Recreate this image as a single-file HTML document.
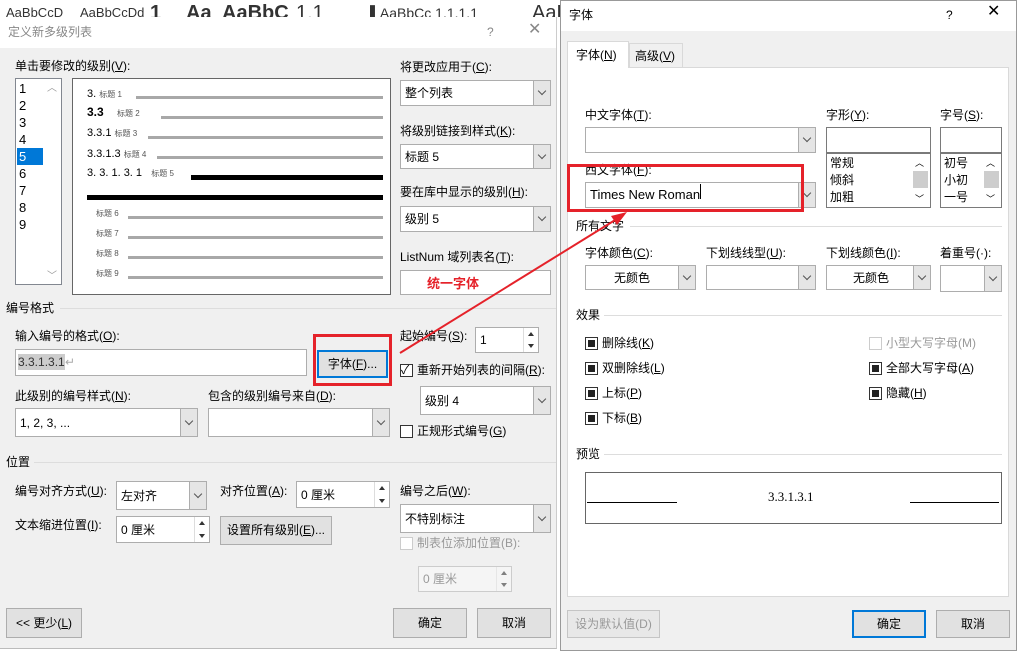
<!DOCTYPE html>
<html><head><meta charset="utf-8"><style>
*{box-sizing:border-box;margin:0;padding:0}
body{width:1020px;height:651px;position:relative;overflow:hidden;background:#fff;font-family:"Liberation Sans","Noto Sans CJK SC",sans-serif;font-size:12px;color:#000}
.a{position:absolute;white-space:nowrap}
.t{position:absolute;white-space:nowrap;line-height:14px}
.box{position:absolute;background:#fff;border:1px solid #7a7a7a}
.cb{position:absolute;background:#fff;border:1px solid #adadad}
.cb .ar{position:absolute;right:0;top:0;bottom:0;width:17px;background:#e5e5e5;border-left:1px solid #adadad}
.cb .ar:after{content:"";position:absolute;left:5px;top:50%;margin-top:-5px;width:5px;height:5px;border-right:1px solid #555;border-bottom:1px solid #555;transform:rotate(45deg)}
.cb span{position:absolute;left:4px;top:50%;margin-top:-8px;line-height:16px}
.btn{position:absolute;background:#e1e1e1;border:1px solid #adadad;text-align:center}
.sp{position:absolute;background:#fff;border:1px solid #adadad}
.sp .s{position:absolute;right:0;top:0;bottom:0;width:15px;border-left:1px solid #ddd;background:#fff}
.sp .s:before{content:"";position:absolute;left:4px;top:4px;border:3px solid transparent;border-bottom:4px solid #333;border-top:0}
.sp .s:after{content:"";position:absolute;left:4px;bottom:4px;border:3px solid transparent;border-top:4px solid #333;border-bottom:0}
.sp span{position:absolute;left:4px;top:50%;margin-top:-8px;line-height:16px}
.chk{position:absolute;width:13px;height:13px;border:1px solid #333;background:#fff}
.chk.f:after{content:"";position:absolute;left:2px;top:2px;width:7px;height:7px;background:#222}
.gl{position:absolute;height:3px;background:#a8a8a8}
.bl{position:absolute;height:5px;background:#000}
.sm{font-size:8px;color:#555}
.sep{position:absolute;height:1px;background:#ddd}
</style></head><body>
<!-- ribbon strip -->
<div class="a" style="left:0;top:0;width:560px;height:17px;background:#fff;overflow:hidden;color:#333">
<span style="position:absolute;left:6px;top:3px;font-size:13px;line-height:20px">AaBbCcD</span>
<span style="position:absolute;left:80px;top:3px;font-size:13px;line-height:20px">AaBbCcDd</span>
<span style="position:absolute;left:150px;top:1px;font-weight:bold;font-size:20px;line-height:24px">1</span>
<span style="position:absolute;left:186px;top:1px;font-weight:bold;font-size:20px;line-height:24px">Aa</span>
<span style="position:absolute;left:222px;top:1px;font-weight:bold;font-size:20px;line-height:24px">AaBbC</span>
<span style="position:absolute;left:296px;top:1px;font-size:20px;line-height:24px">1.1</span>
<span style="position:absolute;left:370px;top:3px;font-size:14px;line-height:20px">▌AaBbCc 1.1.1.1</span>
<span style="position:absolute;left:532px;top:1px;font-size:20px;line-height:24px">AaB</span>
</div>
<div class="a" style="left:0;top:17px;width:557px;height:632px;background:#f0f0f0;border-right:1px solid #ccc;border-bottom:1px solid #bbb"></div>
<div class="a" style="left:0;top:17px;width:556px;height:31px;background:#fff"></div>
<div class="t" style="left:8px;top:25px;color:#888">定义新多级列表</div>
<div class="t" style="left:487px;top:25px;color:#888">?</div>
<div class="t" style="left:528px;top:23px;color:#888;font-size:16px">✕</div>

<div class="t" style="left:15px;top:59px">单击要修改的级别(<u>V</u>):</div>
<div class="box" style="left:15px;top:78px;width:47px;height:207px;border-color:#828790"></div>
<div class="a" style="left:17px;top:148px;width:26px;height:17px;background:#0078d7"></div>
<div class="a" style="left:19px;top:80px;line-height:17px;font-size:13px">1<br>2<br>3<br>4<br><span style="color:#fff">5</span><br>6<br>7<br>8<br>9</div>
<div class="t" style="left:47px;top:82px;color:#999;font-size:10px">︿</div>
<div class="t" style="left:47px;top:270px;color:#999;font-size:10px">﹀</div>

<div class="box" style="left:72px;top:78px;width:319px;height:217px;border-color:#666"></div>
<div class="t" style="left:87px;top:87px;font-size:11px">3. <span class="sm">标题 1</span></div><div class="gl" style="left:136px;top:96px;width:247px"></div>
<div class="t" style="left:87px;top:105px;font-size:12px;font-weight:bold">3.3 &nbsp;&nbsp;&nbsp;<span class="sm" style="font-weight:normal">标题 2</span></div><div class="gl" style="left:161px;top:116px;width:222px"></div>
<div class="t" style="left:87px;top:126px;font-size:11px">3.3.1 <span class="sm">标题 3</span></div><div class="gl" style="left:148px;top:136px;width:235px"></div>
<div class="t" style="left:87px;top:147px;font-size:11px">3.3.1.3 <span class="sm">标题 4</span></div><div class="gl" style="left:157px;top:156px;width:226px"></div>
<div class="t" style="left:87px;top:166px;font-size:11px">3. 3. 1. 3. 1 &nbsp;&nbsp;<span class="sm">标题 5</span></div><div class="bl" style="left:191px;top:175px;width:192px"></div>
<div class="bl" style="left:87px;top:195px;width:296px"></div>
<div class="t sm" style="left:96px;top:207px">标题 6</div><div class="gl" style="left:128px;top:216px;width:255px"></div>
<div class="t sm" style="left:96px;top:227px">标题 7</div><div class="gl" style="left:128px;top:236px;width:255px"></div>
<div class="t sm" style="left:96px;top:247px">标题 8</div><div class="gl" style="left:128px;top:256px;width:255px"></div>
<div class="t sm" style="left:96px;top:267px">标题 9</div><div class="gl" style="left:128px;top:276px;width:255px"></div>

<div class="t" style="left:400px;top:60px">将更改应用于(<u>C</u>):</div>
<div class="cb" style="left:400px;top:80px;width:151px;height:26px"><span>整个列表</span><div class="ar"></div></div>
<div class="t" style="left:400px;top:124px">将级别链接到样式(<u>K</u>):</div>
<div class="cb" style="left:400px;top:144px;width:151px;height:25px"><span>标题 5</span><div class="ar"></div></div>
<div class="t" style="left:400px;top:185px">要在库中显示的级别(<u>H</u>):</div>
<div class="cb" style="left:400px;top:206px;width:151px;height:26px"><span>级别 5</span><div class="ar"></div></div>
<div class="t" style="left:400px;top:250px">ListNum 域列表名(<u>T</u>):</div>
<div class="box" style="left:400px;top:270px;width:151px;height:25px;border-color:#adadad"></div>
<div class="t" style="left:427px;top:277px;color:#e5222a;font-weight:bold;font-size:13px">统一字体</div>

<div class="t" style="left:6px;top:301px">编号格式</div><div class="sep" style="left:60px;top:308px;width:496px"></div>
<div class="t" style="left:15px;top:329px">输入编号的格式(<u>O</u>):</div>
<div class="box" style="left:15px;top:349px;width:292px;height:27px;border-color:#adadad"></div>
<div class="t" style="left:18px;top:354px;background:#ccc;color:#333;line-height:16px">3.3.1.3.1</div><div class="t" style="left:65px;top:354px;color:#aaa;line-height:16px">↵</div>
<div class="btn" style="left:317px;top:350px;width:71px;height:28px;border:2px solid #0078d7;line-height:24px">字体(<u>F</u>)...</div>
<div class="a" style="left:313px;top:334px;width:79px;height:52px;border:3px solid #e5222a"></div>
<div class="t" style="left:400px;top:329px">起始编号(<u>S</u>):</div>
<div class="sp" style="left:475px;top:327px;width:64px;height:26px"><span>1</span><div class="s"></div></div>
<div class="chk" style="left:400px;top:364px;border-color:#333"></div><div class="t" style="left:401px;top:363px;font-size:12px">✓</div>
<div class="t" style="left:417px;top:363px">重新开始列表的间隔(<u>R</u>):</div>
<div class="cb" style="left:420px;top:386px;width:131px;height:29px"><span>级别 4</span><div class="ar"></div></div>
<div class="chk" style="left:400px;top:425px"></div><div class="t" style="left:417px;top:424px">正规形式编号(<u>G</u>)</div>
<div class="t" style="left:15px;top:389px">此级别的编号样式(<u>N</u>):</div>
<div class="cb" style="left:15px;top:408px;width:183px;height:29px"><span>1, 2, 3, ...</span><div class="ar"></div></div>
<div class="t" style="left:208px;top:389px">包含的级别编号来自(<u>D</u>):</div>
<div class="cb" style="left:208px;top:408px;width:182px;height:29px"><div class="ar"></div></div>

<div class="t" style="left:6px;top:455px">位置</div><div class="sep" style="left:34px;top:462px;width:522px"></div>
<div class="t" style="left:15px;top:484px">编号对齐方式(<u>U</u>):</div>
<div class="cb" style="left:116px;top:481px;width:91px;height:29px"><span>左对齐</span><div class="ar"></div></div>
<div class="t" style="left:220px;top:484px">对齐位置(<u>A</u>):</div>
<div class="sp" style="left:296px;top:481px;width:94px;height:27px"><span>0 厘米</span><div class="s"></div></div>
<div class="t" style="left:400px;top:484px">编号之后(<u>W</u>):</div>
<div class="cb" style="left:400px;top:504px;width:151px;height:29px"><span>不特别标注</span><div class="ar"></div></div>
<div class="t" style="left:15px;top:518px">文本缩进位置(<u>I</u>):</div>
<div class="sp" style="left:116px;top:516px;width:94px;height:27px"><span>0 厘米</span><div class="s"></div></div>
<div class="btn" style="left:220px;top:516px;width:112px;height:29px;line-height:27px">设置所有级别(<u>E</u>)...</div>
<div class="chk" style="left:400px;top:537px;border-color:#ccc"></div><div class="t" style="left:417px;top:536px;color:#999">制表位添加位置(B):</div>
<div class="sp" style="left:418px;top:566px;width:94px;height:26px;border-color:#ccc;background:#f5f5f5;color:#999"><span>0 厘米</span><div class="s" style="background:#f5f5f5;opacity:.6"></div></div>
<div class="btn" style="left:6px;top:608px;width:76px;height:30px;line-height:28px">&lt;&lt; 更少(<u>L</u>)</div>
<div class="btn" style="left:393px;top:608px;width:74px;height:30px;line-height:28px">确定</div>
<div class="btn" style="left:477px;top:608px;width:74px;height:30px;line-height:28px">取消</div>

<!-- right dialog -->
<div class="a" style="left:560px;top:0;width:457px;height:651px;background:#f0f0f0;border:1px solid #999"></div>
<div class="a" style="left:561px;top:1px;width:455px;height:30px;background:#fff"></div>
<div class="t" style="left:569px;top:8px">字体</div>
<div class="t" style="left:946px;top:8px">?</div>
<div class="t" style="left:987px;top:5px;font-size:16px">✕</div>
<div class="a" style="left:567px;top:67px;width:442px;height:530px;background:#fff;border:1px solid #d9d9d9"></div>
<div class="a" style="left:567px;top:41px;width:62px;height:27px;background:#fff;border:1px solid #d9d9d9;border-bottom:none"></div>
<div class="t" style="left:576px;top:48px">字体(<u>N</u>)</div>
<div class="a" style="left:629px;top:43px;width:54px;height:24px;background:#f0f0f0;border:1px solid #d9d9d9;border-bottom:none"></div>
<div class="t" style="left:635px;top:49px">高级(<u>V</u>)</div>

<div class="t" style="left:585px;top:108px">中文字体(<u>T</u>):</div>
<div class="cb" style="left:585px;top:127px;width:231px;height:26px"><div class="ar"></div></div>
<div class="t" style="left:826px;top:108px">字形(<u>Y</u>):</div>
<div class="box" style="left:826px;top:127px;width:105px;height:26px"></div>
<div class="box" style="left:826px;top:153px;width:105px;height:55px"></div>
<div class="a" style="left:830px;top:155px;line-height:17px">常规<br>倾斜<br>加粗</div>
<div class="a" style="left:913px;top:171px;width:15px;height:17px;background:#cdcdcd"></div>
<div class="t" style="left:915px;top:156px;font-size:9px">︿</div><div class="t" style="left:915px;top:192px;font-size:9px">﹀</div>
<div class="t" style="left:940px;top:108px">字号(<u>S</u>):</div>
<div class="box" style="left:940px;top:127px;width:62px;height:26px"></div>
<div class="box" style="left:940px;top:153px;width:62px;height:55px"></div>
<div class="a" style="left:944px;top:155px;line-height:17px">初号<br>小初<br>一号</div>
<div class="a" style="left:984px;top:171px;width:15px;height:17px;background:#cdcdcd"></div>
<div class="t" style="left:986px;top:156px;font-size:9px">︿</div><div class="t" style="left:986px;top:192px;font-size:9px">﹀</div>

<div class="t" style="left:585px;top:163px">西文字体(<u>F</u>):</div>
<div class="cb" style="left:585px;top:182px;width:231px;height:26px"><span style="font-size:13px">Times New Roman<span style="position:static;display:inline-block;width:1px;height:15px;background:#000;vertical-align:middle"></span></span><div class="ar"></div></div>
<div class="a" style="left:567px;top:164px;width:237px;height:48px;border:3px solid #e5222a"></div>

<div class="t" style="left:576px;top:219px">所有文字</div><div class="sep" style="left:630px;top:226px;width:372px"></div>
<div class="t" style="left:585px;top:246px">字体颜色(<u>C</u>):</div>
<div class="cb" style="left:585px;top:265px;width:111px;height:25px"><span style="left:28px">无颜色</span><div class="ar"></div></div>
<div class="t" style="left:706px;top:246px">下划线线型(<u>U</u>):</div>
<div class="cb" style="left:706px;top:265px;width:110px;height:25px"><div class="ar"></div></div>
<div class="t" style="left:826px;top:246px">下划线颜色(<u>I</u>):</div>
<div class="cb" style="left:826px;top:265px;width:105px;height:25px"><span style="left:26px">无颜色</span><div class="ar"></div></div>
<div class="t" style="left:940px;top:246px">着重号(·):</div>
<div class="cb" style="left:940px;top:265px;width:62px;height:27px"><div class="ar"></div></div>

<div class="t" style="left:576px;top:308px">效果</div><div class="sep" style="left:604px;top:315px;width:398px"></div>
<div class="chk f" style="left:585px;top:337px"></div><div class="t" style="left:602px;top:336px">删除线(<u>K</u>)</div>
<div class="chk f" style="left:585px;top:362px"></div><div class="t" style="left:602px;top:361px">双删除线(<u>L</u>)</div>
<div class="chk f" style="left:585px;top:387px"></div><div class="t" style="left:602px;top:386px">上标(<u>P</u>)</div>
<div class="chk f" style="left:585px;top:412px"></div><div class="t" style="left:602px;top:411px">下标(<u>B</u>)</div>
<div class="chk" style="left:869px;top:337px;border-color:#ccc"></div><div class="t" style="left:886px;top:336px;color:#999">小型大写字母(M)</div>
<div class="chk f" style="left:869px;top:362px"></div><div class="t" style="left:886px;top:361px">全部大写字母(<u>A</u>)</div>
<div class="chk f" style="left:869px;top:387px"></div><div class="t" style="left:886px;top:386px">隐藏(<u>H</u>)</div>

<div class="t" style="left:576px;top:447px">预览</div><div class="sep" style="left:604px;top:454px;width:398px"></div>
<div class="box" style="left:585px;top:472px;width:417px;height:52px;border-color:#666"></div>
<div class="t" style="left:768px;top:490px;font-family:'Liberation Serif',serif;font-size:13px">3.3.1.3.1</div>
<div class="a" style="left:587px;top:502px;width:90px;height:1px;background:#000"></div>
<div class="a" style="left:910px;top:502px;width:89px;height:1px;background:#000"></div>

<div class="btn" style="left:567px;top:610px;width:93px;height:28px;line-height:26px;color:#999;border-color:#c5c5c5;background:#e8e8e8">设为默认值(D)</div>
<div class="btn" style="left:852px;top:610px;width:74px;height:28px;line-height:24px;border:2px solid #0078d7">确定</div>
<div class="btn" style="left:936px;top:610px;width:74px;height:28px;line-height:26px">取消</div>

<!-- red arrow -->
<svg class="a" style="left:0;top:0" width="1020" height="651"><line x1="400" y1="353" x2="620" y2="217" stroke="#e5222a" stroke-width="2"/><polygon points="627,212 611,216 617,225" fill="#e5222a"/></svg>
</body></html>
